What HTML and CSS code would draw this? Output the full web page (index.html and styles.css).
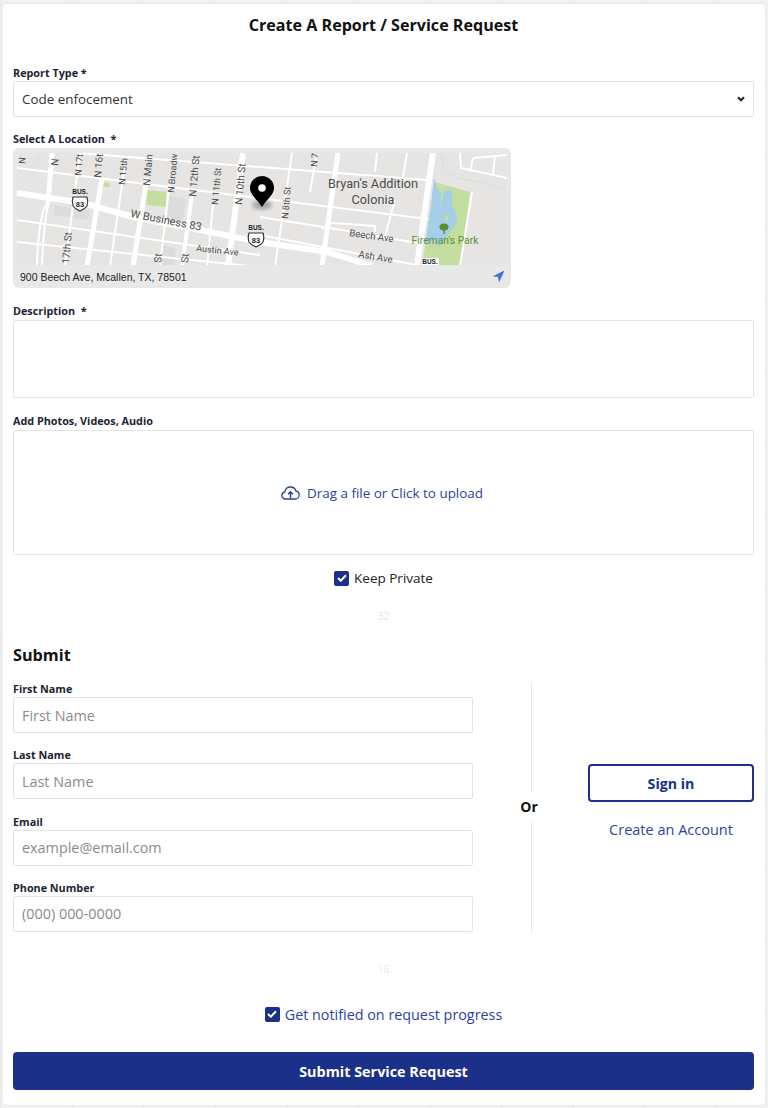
FILE: index.html
```html
<!DOCTYPE html>
<html lang="en">
<head>
    <meta charset="UTF-8">
    <meta name="viewport" content="width=device-width, initial-scale=1.0">
    <title>Create A Report / Service Request</title>
    <link rel="stylesheet" href="styles.css">
</head>
<body>
<div class="card">
    <h1>Create A Report / Service Request</h1>

    <div class="field first">
        <label for="reportType">Report Type *</label>
        <div class="select-wrap">
            <select id="reportType">
                <option>Code enfocement</option>
            </select>
            <svg class="chevron" width="8" height="6" viewBox="0 0 8 6"><path d="M1 1.300 4 4.300 7 1.300" fill="none" stroke="#1c2233" stroke-width="2"/></svg>
        </div>
    </div>

    <div class="field">
        <label>Select A Location &nbsp;*</label>
        <div class="map-box">
            <svg class="map" width="490" height="112" viewBox="17 153 490 112">
                <defs>
                    <filter id="blur"><feGaussianBlur stdDeviation="2"/></filter>
                </defs>
                <rect x="17" y="153" width="490" height="113" fill="#e6e5e3"/>
                <!-- building blocks -->
                <g fill="#dcdcdf">
                    <path d="M55 205 90 211 88 220 54 215Z"/>
                    <path d="M170 196 186 199 183 222 167 219Z"/>
                    <path d="M162 246 176 248 174 266 160 266Z"/>
                </g>
                <!-- parks -->
                <path d="M147 190 166 192 167 207 146 205Z" fill="#c4dea0"/>
                <path d="M103 182 110 183 110 187 103 187Z" fill="#c4dea0"/>
                <path d="M435 182 470 192 461 266 422 266Z" fill="#c4dea0"/>
                <!-- lake -->
                <path d="M434 178 438 190 441 192 440 215 436 240 425 244 431 205Z" fill="#a3cfe9"/>
                <path d="M444 192C450 186 453 192 452 200 451 208 458 212 457 220 455 230 448 232 444 240 441 248 434 248 435 240 437 225 440 205 444 192Z" fill="#a3cfe9"/>
                <path d="M445 218C447 212 450 214 449 218 447 222 444 222 445 218Z" fill="#c4dea0"/>
                <!-- faint boundary lines -->
                <g fill="none" stroke="#d9dcdf" stroke-width="1">
                    <path d="M442 153C441 172 450 178 470 180L507 190"/>
                    <path d="M40 153C36 165 27 170 17 172"/>
                </g>
                <!-- small streets -->
                <g fill="none" stroke="#fff" stroke-width="2">
                    <path d="M17 168 428 219"/>
                    <path d="M77 153 428 180"/>
                    <path d="M17 220 260 255"/>
                    <path d="M17 242 250 266"/>
                    <path d="M260 217 330 228 417 243"/>
                    <path d="M260 235 417 265"/>
                    <path d="M80 153 65 266"/>
                    <path d="M125 165 110 266"/>
                    <path d="M170 178 160 266"/>
                    <path d="M213 205 207 266"/>
                    <path d="M292 153 275 266"/>
                    <path d="M316 158 310 192"/>
                    <path d="M377 153 375 172"/>
                    <path d="M407 153 403 177"/>
                    <path d="M395 200 384 240"/>
                    <path d="M332 223 375 226 375 236"/>
                    <path d="M322 229 332 223"/>
                    <path d="M472 192 460 266"/>
                    <path d="M460 153 461 168 507 178"/>
                    <path d="M473 158 470 172M473 158 507 155M495 155 493 174"/>
                </g>
                <!-- big streets -->
                <g fill="none" stroke="#fff">
                    <path d="M17 193 83 203 133 217 200 230 260 242 327 252 372 266" stroke-width="6"/>
                    <path d="M52 153 48 202" stroke-width="5"/>
                    <path d="M48 202C41 210 38 230 37 266" stroke-width="2"/>
                    <path d="M49 202C45 215 43 240 42 266" stroke-width="2"/>
                    <path d="M102 178 87 266" stroke-width="5"/>
                    <path d="M147 178 133 266" stroke-width="5"/>
                    <path d="M192 195 182 266" stroke-width="4"/>
                    <path d="M243 153 228 266" stroke-width="6"/>
                    <path d="M338 153 322 266" stroke-width="5"/>
                    <path d="M433 153 417 266" stroke-width="6"/>
                </g>
                <!-- labels -->
                <g class="map-label">
                    <text transform="translate(25 164) rotate(-85)" class="sm">N</text>
                    <text transform="translate(58 166) rotate(-85)">N</text>
                    <text transform="translate(81 176) rotate(-85)" class="sm">N 17t</text>
                    <text transform="translate(101 178) rotate(-85)">N 16t</text>
                    <text transform="translate(125 185) rotate(-85)" class="sm">N 15th</text>
                    <text transform="translate(150 186) rotate(-85)">N Main</text>
                    <text transform="translate(174 193) rotate(-85)" class="sm">N Broadw</text>
                    <text transform="translate(196 197) rotate(-85)">N 12th St</text>
                    <text transform="translate(218 205) rotate(-85)" class="sm">N 11th St</text>
                    <text transform="translate(242 205) rotate(-85)">N 10th St</text>
                    <text transform="translate(288 219) rotate(-85)" class="sm">N 8th St</text>
                    <text transform="translate(317 167) rotate(-85)" class="sm">N 7</text>
                    <text transform="translate(69 264) rotate(-85)">17th St</text>
                    <text transform="translate(161 263) rotate(-85)">St</text>
                    <text transform="translate(188 263) rotate(-85)">St</text>
                    <text transform="translate(130 217) rotate(11)" class="lg">W Business 83</text>
                    <text transform="translate(196 251) rotate(6)" class="sm">Austin Ave</text>
                    <text transform="translate(349 236) rotate(8)" class="sm2">Beech Ave</text>
                    <text transform="translate(358 257) rotate(10)" class="sm2">Ash Ave</text>
                    <text x="373" y="188" text-anchor="middle" class="xl">Bryan's Addition</text>
                    <text x="373" y="204" text-anchor="middle" class="xl">Colonia</text>
                    <text x="445" y="244" text-anchor="middle" class="park">Fireman's Park</text>
                </g>
                <!-- tree -->
                <ellipse cx="444" cy="227" rx="4.500" ry="3.500" fill="#5e8a2e"/>
                <path d="M443.300 229h1.400v5h-1.400z" fill="#5e8a2e"/>
                <!-- shields -->
                <g class="shield">
                    <rect x="72" y="188" width="16" height="7" fill="#e6e5e3"/>
                    <text x="80" y="194" text-anchor="middle" class="bus">BUS.</text>
                    <path d="M73 197h14c1 3 1 6 0 9-2 3-5 4-7 5-2-1-5-2-7-5-1-3-1-6 0-9Z" fill="#fff" stroke="#333" stroke-width="1.200"/>
                    <text x="80" y="207" text-anchor="middle" class="num">83</text>
                    <rect x="248" y="224" width="16" height="7" fill="#e6e5e3"/>
                    <text x="256" y="230" text-anchor="middle" class="bus">BUS.</text>
                    <path d="M249 233h14c1 3 1 6 0 9-2 3-5 4-7 5-2-1-5-2-7-5-1-3-1-6 0-9Z" fill="#fff" stroke="#333" stroke-width="1.200"/>
                    <text x="256" y="243" text-anchor="middle" class="num">83</text>
                    <rect x="422" y="258" width="17" height="7" fill="#fff"/>
                    <text x="430" y="264" text-anchor="middle" class="bus">BUS.</text>
                </g>
                <!-- pin -->
                <ellipse cx="262" cy="205" rx="10" ry="4.500" fill="#777" opacity=".6" filter="url(#blur)"/>
                <path d="M262 207C258 200 250 195 250 188a12 12 0 0 1 24 0C274 195 266 200 262 207Z" fill="#000"/>
                <circle cx="262" cy="188" r="3.800" fill="#fff"/>
            </svg>
            <div class="map-foot">
                <span class="address">900 Beech Ave, Mcallen, TX, 78501</span>
                <svg width="13" height="13" viewBox="0 0 13 13"><path d="M12.500 .5 .8 6.300 6 7 7 12.500Z" fill="#3f72d6"/></svg>
            </div>
        </div>
    </div>

    <div class="field field-16">
        <label for="desc" class="tight">Description &nbsp;*</label>
        <textarea id="desc"></textarea>
    </div>

    <div class="field field-16">
        <label class="tight">Add Photos, Videos, Audio</label>
        <div class="dropzone">
            <svg width="19" height="14" viewBox="0 0 19 14" fill="none" stroke="#2d439c" stroke-width="1.300"><path d="M5 13H4.500C2.500 13 .8 11.500 .8 9.500 .8 7.800 2 6.300 3.800 6 4.200 3 6.600 1 9.500 1 12 1 14.200 2.600 14.900 5 16.800 5.200 18.200 7 18.200 9 18.200 11.200 16.500 13 14.300 13Z"/><path d="M9.500 12V6M7 8.300 9.500 5.800 12 8.300" stroke-width="1.500"/></svg>
            <span>Drag a file or Click to upload</span>
        </div>
    </div>

    <div class="check-row private">
        <span class="check"><svg width="10" height="8" viewBox="0 0 10 8"><path d="M1 4 3.800 6.700 9 1.200" fill="none" stroke="#fff" stroke-width="2"/></svg></span>
        <span>Keep Private</span>
    </div>

    <div class="spacer-tag tag-32">32</div>

    <h2>Submit</h2>

    <div class="contact">
        <div class="contact-fields">
            <div>
                <label for="firstName">First Name</label>
                <input id="firstName" type="text" placeholder="First Name">
            </div>
            <div>
                <label for="lastName">Last Name</label>
                <input id="lastName" type="text" placeholder="Last Name">
            </div>
            <div>
                <label for="email">Email</label>
                <input id="email" type="text" placeholder="example@email.com">
            </div>
            <div>
                <label for="phone">Phone Number</label>
                <input id="phone" type="text" placeholder="(000) 000-0000">
            </div>
        </div>
        <div class="or-col">
            <span class="or-line"></span>
            <span class="or-text">Or</span>
            <span class="or-line"></span>
        </div>
        <div class="account">
            <button class="signin">Sign in</button>
            <a class="create" href="#">Create an Account</a>
        </div>
    </div>

    <div class="spacer-tag tag-16">16</div>

    <div class="check-row notify">
        <span class="check"><svg width="10" height="8" viewBox="0 0 10 8"><path d="M1 4 3.800 6.700 9 1.200" fill="none" stroke="#fff" stroke-width="2"/></svg></span>
        <span>Get notified on request progress</span>
    </div>

    <button class="submit">Submit Service Request</button>
</div>
</body>
</html>
```

FILE: styles.css
```css
*{
    box-sizing: border-box;
}
body{
    margin: 0;
    padding: 4px 3px 3px;
    font-family: "Open Sans",sans-serif;
    color: #222;
    background-color: #f1f1f1;
    background-image: linear-gradient(#e9e9e9 1px,transparent 1px),linear-gradient(90deg,#e9e9e9 1px,transparent 1px);
    background-size: 71.6px 71.6px;
    background-position: 0 12px;
}
.card{
    background: #fff;
    border-radius: 4px;
    padding: 10px 11px 15px 10px;
    box-shadow: 0 0 2px rgba(0,0,0,.08);
}
h1{
    margin: 0;
    font-size: 16.100px;
    line-height: 22px;
    font-weight: 700;
    color: #111;
    text-align: center;
}
h2{
    margin: 21px 0 0;
    font-size: 16.200px;
    line-height: 22px;
    font-weight: 700;
    color: #111;
}
label{
    display: block;
    height: 14px;
    margin-bottom: 1px;
    font-size: 10.800px;
    line-height: 14px;
    font-weight: 700;
    color: #1c2433;
}
label.tight{
    margin-bottom: 2px;
}
.field{
    margin-top: 15px;
}
.field.first{
    margin-top: 30px;
}
.field.field-16{
    margin-top: 16px;
}
.select-wrap{
    position: relative;
}
select,input,textarea{
    display: block;
    width: 100%;
    border: 1px solid #e4e4e4;
    border-radius: 2px;
    background: #fff;
    font-family: "Open Sans",sans-serif;
    color: #333;
    outline: none;
}
select,input{
    height: 36px;
    padding: 0 8px;
}
input{
    font-size: 14.400px;
}
select{
    appearance: none;
    font-size: 13.400px;
}
input::placeholder{
    color: #8b8b8b;
    opacity: 1;
}
textarea{
    height: 78px;
    resize: none;
}
.chevron{
    position: absolute;
    right: 9px;
    top: 15px;
}
.map-box{
    width: 498px;
    height: 140px;
    margin-top: 2px;
    padding: 5px 4px 0;
    border-radius: 6px;
    background: #e8e8e8;
}
.map{
    display: block;
}
.map-foot{
    display: flex;
    justify-content: space-between;
    align-items: center;
    height: 23px;
    padding: 0 2px 0 3px;
}
.address{
    font-family: "Liberation Sans",sans-serif;
    font-size: 10.500px;
    color: #222;
}
.map-label text{
    font-family: Roboto,sans-serif;
    font-size: 10px;
    fill: #4d4d4d;
}
.map-label .sm{
    font-size: 9px;
}
.map-label .sm2{
    font-size: 9.600px;
}
.map-label .lg{
    font-size: 11px;
}
.map-label .xl{
    font-size: 12.700px;
}
.map-label .park{
    font-size: 10.300px;
    fill: #5f8f3a;
}
.shield text{
    font-family: "Liberation Sans",sans-serif;
    fill: #222;
    font-weight: 700;
}
.shield .bus{
    font-size: 6.500px;
}
.shield .num{
    font-size: 7.500px;
}
.dropzone{
    display: flex;
    justify-content: center;
    align-items: center;
    gap: 7px;
    height: 125px;
    padding-right: 3px;
    border: 1px solid #e4e4e4;
    border-radius: 2px;
    font-size: 13.450px;
    color: #2d439c;
}
.check-row{
    display: flex;
    justify-content: center;
    align-items: center;
    gap: 5px;
    height: 20px;
}
.check-row.private{
    margin-top: 13px;
    font-size: 13.500px;
    color: #222;
}
.check-row.notify{
    margin-top: 28px;
    font-size: 14.350px;
    color: #2d439c;
}
.check{
    display: flex;
    justify-content: center;
    align-items: center;
    width: 15px;
    height: 15px;
    border-radius: 2px;
    background: #1b3089;
}
.spacer-tag{
    height: 14px;
    font-size: 10px;
    line-height: 14px;
    color: #fbdde8;
    text-align: center;
}
.tag-32{
    margin-top: 21px;
}
.tag-16{
    margin-top: 30px;
}
.contact{
    display: grid;
    grid-template-columns: 460px 1fr 166px;
    height: 250px;
    margin-top: 16px;
}
.contact-fields{
    display: flex;
    flex-direction: column;
    gap: 15.300px;
}
.or-col{
    display: flex;
    flex-direction: column;
    align-items: center;
    padding-left: 2px;
}
.or-line{
    flex: 1;
    width: 1px;
    background: #e8e8e8;
}
.or-text{
    width: 100%;
    height: 29px;
    padding-right: 5px;
    font-size: 14px;
    line-height: 27px;
    font-weight: 700;
    color: #111;
    text-align: center;
}
.account{
    display: flex;
    flex-direction: column;
    justify-content: center;
    align-items: center;
    padding-bottom: 10px;
}
.signin{
    width: 100%;
    height: 38px;
    margin-bottom: 18px;
    border: 2px solid #1b3089;
    border-radius: 4px;
    background: #fff;
    font-family: "Open Sans",sans-serif;
    font-size: 14.200px;
    font-weight: 700;
    color: #1b3089;
    cursor: pointer;
}
.create{
    font-size: 14.500px;
    line-height: 20px;
    color: #2d439c;
    text-decoration: none;
}
.submit{
    display: block;
    width: 100%;
    height: 38px;
    margin-top: 28px;
    border: none;
    border-radius: 4px;
    background-color: #1b3089;
    font-family: "Open Sans",sans-serif;
    font-size: 14.400px;
    font-weight: 700;
    color: #fff;
    cursor: pointer;
}
```
